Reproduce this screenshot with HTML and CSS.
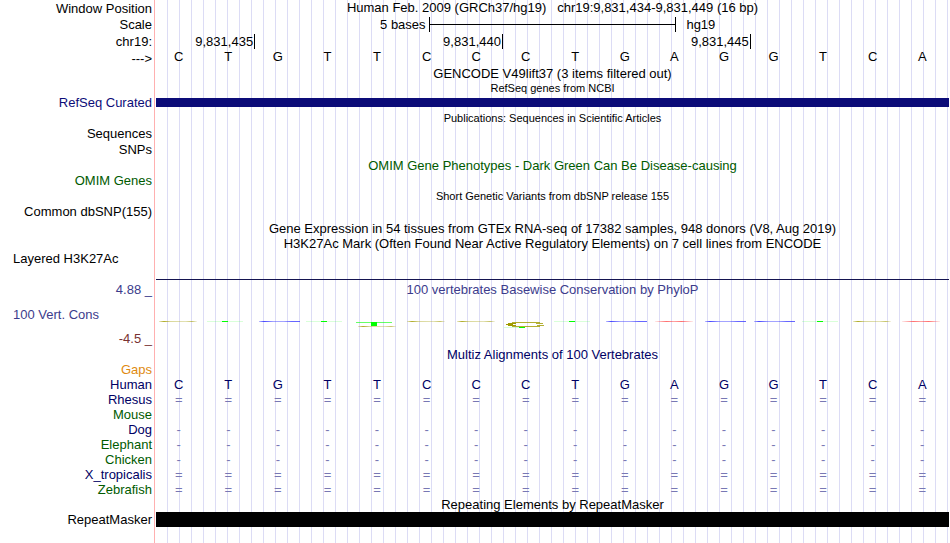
FILE: index.html
```html
<!DOCTYPE html>
<html lang="en">
<head>
<meta charset="utf-8">
<meta name="viewport" content="width=device-width, initial-scale=1.0">
<title>chr19:9,831,434-9,831,449</title>
<link rel="stylesheet" href="styles.css">
</head>
<body>
<main class="browser">

  <!-- ruler -->
  <div class="row h16"><div class="label">Window Position</div><div class="title top">Human Feb. 2009 (GRCh37/hg19) &nbsp; chr19:9,831,434-9,831,449 (16 bp)</div></div>
  <div class="row h17"><div class="label">Scale</div>
    <div class="scale"><span class="scale-size">5 bases</span><span class="scale-bar"></span><span class="scale-db">hg19</span></div>
  </div>
  <div class="row h17"><div class="label">chr19:</div>
    <div class="ruler"><span>9,831,435</span><span>9,831,440</span><span>9,831,445</span></div>
  </div>
  <div class="row h16"><div class="label">---&gt;</div>
    <div class="bases top"><span>C</span><span>T</span><span>G</span><span>T</span><span>T</span><span>C</span><span>C</span><span>C</span><span>T</span><span>G</span><span>A</span><span>G</span><span>G</span><span>T</span><span>C</span><span>A</span></div>
  </div>

  <!-- genes -->
  <div class="row"><div class="title">GENCODE V49lift37 (3 items filtered out)</div></div>
  <div class="row h14"><div class="title small">RefSeq genes from NCBI</div></div>
  <div class="row"><div class="label blue">RefSeq Curated</div><div class="bar refseq"></div></div>
  <div class="row h16"><div class="title small low">Publications: Sequences in Scientific Articles</div></div>
  <div class="row"><div class="label">Sequences</div></div>
  <div class="row h17"><div class="label">SNPs</div></div>
  <div class="row"><div class="title green">OMIM Gene Phenotypes - Dark Green Can Be Disease-causing</div></div>
  <div class="row"><div class="label green">OMIM Genes</div></div>
  <div class="row h16"><div class="title small low">Short Genetic Variants from dbSNP release 155</div></div>
  <div class="row"><div class="label">Common dbSNP(155)</div></div>
  <div class="row h17"><div class="title bottom">Gene Expression in 54 tissues from GTEx RNA-seq of 17382 samples, 948 donors (V8, Aug 2019)</div></div>
  <div class="row"><div class="title">H3K27Ac Mark (Often Found Near Active Regulatory Elements) on 7 cell lines from ENCODE</div></div>
  <div class="row"><div class="label left">Layered H3K27Ac</div></div>

  <!-- conservation -->
  <div class="cons">
    <div class="cons-line"></div>
    <div class="row"><div class="label slate">4.88 _</div><div class="title slate">100 vertebrates Basewise Conservation by PhyloP</div></div>
    <div class="row wiggle"><div class="label left slate">100 Vert. Cons</div>
      <svg class="logo" viewBox="0 0 793 34" preserveAspectRatio="none" shape-rendering="crispEdges" aria-hidden="true">
        <defs>
          <linearGradient id="olive"><stop offset="0" stop-color="#a09b00" stop-opacity=".2"/><stop offset=".13" stop-color="#a09b00" stop-opacity=".85"/><stop offset=".3" stop-color="#a09b00" stop-opacity=".4"/><stop offset=".7" stop-color="#a09b00" stop-opacity=".3"/><stop offset=".87" stop-color="#a09b00" stop-opacity=".6"/><stop offset="1" stop-color="#a09b00" stop-opacity=".1"/></linearGradient>
          <linearGradient id="blue"><stop offset="0" stop-color="#33f" stop-opacity=".3"/><stop offset=".12" stop-color="#33f" stop-opacity=".9"/><stop offset=".35" stop-color="#33f" stop-opacity=".45"/><stop offset=".6" stop-color="#33f" stop-opacity=".45"/><stop offset=".8" stop-color="#33f" stop-opacity=".75"/><stop offset="1" stop-color="#33f" stop-opacity=".75"/></linearGradient>
          <linearGradient id="red"><stop offset="0" stop-color="#f33" stop-opacity=".1"/><stop offset=".3" stop-color="#f33" stop-opacity=".7"/><stop offset=".5" stop-color="#f33" stop-opacity=".45"/><stop offset=".7" stop-color="#f33" stop-opacity=".7"/><stop offset="1" stop-color="#f33" stop-opacity=".1"/></linearGradient>
          <g id="c"><rect x="3" y="24" width="38" height="1" fill="url(#olive)"/></g>
          <g id="g"><rect x="4" y="24" width="41" height="1" fill="url(#blue)"/></g>
          <g id="a"><rect x="3" y="24" width="38" height="1" fill="url(#red)"/></g>
          <g id="t"><rect x="1" y="24" width="36" height="1" fill="#0f0" fill-opacity=".15"/><rect x="16" y="24" width="6" height="1" fill="#0f0"/></g>
        </defs>
        <use href="#c" x="0"/><use href="#t" x="50"/><use href="#g" x="99"/><use href="#t" x="149"/>
        <rect x="200" y="25" width="36" height="1" fill="#0f0" fill-opacity=".6"/>
        <rect x="215" y="25" width="6" height="4" fill="#0f0"/>
        <rect x="202" y="29" width="38" height="1" fill="url(#olive)"/>
        <use href="#c" x="248"/><use href="#c" x="298"/>
        <g fill="#a09b00">
          <rect x="356" y="25" width="28" height="1" fill-opacity=".8"/>
          <rect x="352" y="26" width="8" height="1"/><rect x="380" y="26" width="7" height="1" fill-opacity=".8"/>
          <rect x="350" y="27" width="7" height="1"/>
          <rect x="352" y="28" width="8" height="1"/><rect x="381" y="28" width="7" height="1" fill-opacity=".8"/>
          <rect x="356" y="29" width="28" height="1" fill-opacity=".8"/>
        </g>
        <rect x="348" y="30" width="15" height="1" fill="#0f0" fill-opacity=".15"/>
        <rect x="363" y="30" width="6" height="1" fill="#0f0"/>
        <use href="#t" x="397"/><use href="#g" x="446"/><use href="#a" x="496"/><use href="#g" x="545"/><use href="#g" x="594"/><use href="#t" x="645"/><use href="#c" x="694"/><use href="#a" x="743"/>
      </svg>
    </div>
    <div class="row"><div class="label maroon">-4.5 _</div></div>
  </div>

  <!-- multiz -->
  <div class="row"><div class="title navy">Multiz Alignments of 100 Vertebrates</div></div>
  <div class="row"><div class="label orange">Gaps</div></div>
  <div class="row"><div class="label navy">Human</div><div class="bases navy"><span>C</span><span>T</span><span>G</span><span>T</span><span>T</span><span>C</span><span>C</span><span>C</span><span>T</span><span>G</span><span>A</span><span>G</span><span>G</span><span>T</span><span>C</span><span>A</span></div></div>
  <div class="row"><div class="label navy">Rhesus</div><div class="bases align"><span>=</span><span>=</span><span>=</span><span>=</span><span>=</span><span>=</span><span>=</span><span>=</span><span>=</span><span>=</span><span>=</span><span>=</span><span>=</span><span>=</span><span>=</span><span>=</span></div></div>
  <div class="row"><div class="label green">Mouse</div></div>
  <div class="row"><div class="label navy">Dog</div><div class="bases align"><span>-</span><span>-</span><span>-</span><span>-</span><span>-</span><span>-</span><span>-</span><span>-</span><span>-</span><span>-</span><span>-</span><span>-</span><span>-</span><span>-</span><span>-</span><span>-</span></div></div>
  <div class="row"><div class="label green">Elephant</div><div class="bases align"><span>-</span><span>-</span><span>-</span><span>-</span><span>-</span><span>-</span><span>-</span><span>-</span><span>-</span><span>-</span><span>-</span><span>-</span><span>-</span><span>-</span><span>-</span><span>-</span></div></div>
  <div class="row"><div class="label green">Chicken</div><div class="bases align"><span>-</span><span>-</span><span>-</span><span>-</span><span>-</span><span>-</span><span>-</span><span>-</span><span>-</span><span>-</span><span>-</span><span>-</span><span>-</span><span>-</span><span>-</span><span>-</span></div></div>
  <div class="row"><div class="label navy">X_tropicalis</div><div class="bases align"><span>=</span><span>=</span><span>=</span><span>=</span><span>=</span><span>=</span><span>=</span><span>=</span><span>=</span><span>=</span><span>=</span><span>=</span><span>=</span><span>=</span><span>=</span><span>=</span></div></div>
  <div class="row"><div class="label green">Zebrafish</div><div class="bases align"><span>=</span><span>=</span><span>=</span><span>=</span><span>=</span><span>=</span><span>=</span><span>=</span><span>=</span><span>=</span><span>=</span><span>=</span><span>=</span><span>=</span><span>=</span><span>=</span></div></div>

  <!-- repeats -->
  <div class="row"><div class="title">Repeating Elements by RepeatMasker</div></div>
  <div class="row"><div class="label">RepeatMasker</div><div class="bar repeat"></div></div>
</main>
</body>
</html>
```

FILE: styles.css
```css
body {
	margin: 0;
	background: #fff;
	color: #000;
	font-family: "Liberation Sans", Helvetica, Arial, sans-serif;
	font-size: 13px;
	line-height: 15px;
}

/* pink divider, then a guide line every 12px */
.browser {
	min-height: 100vh;
	box-sizing: border-box;
	padding-right: 1px;
	background:
		linear-gradient(#ffb0b0, #ffb0b0) 154px 0 / 1px 100% no-repeat,
		linear-gradient(#fff, #fff) 0 0 / 156px 100% no-repeat,
		repeating-linear-gradient(to right, transparent 0 11px, #dcdcf5 11px 12px);
}

.row {
	display: grid;
	grid-template-columns: 156px 1fr;
	align-items: center;
	height: 15px;
	white-space: nowrap;
}
.h14 { height: 14px; }
.h16 { height: 16px; }
.h17 { height: 17px; }

.label {
	grid-column: 1;
	padding-right: 4px;
	text-align: right;
}
.label.left {
	padding-left: 13px;
	text-align: left;
}

.title {
	grid-column: 2;
	text-align: center;
}
.small { font-size: 11px; }
.low { padding-top: 1px; }
.top { align-self: start; }
.bases.top { line-height: 13px; }
.bottom { align-self: end; }

.blue { color: #0c0c78; }
.navy { color: #000064; }
.green { color: #005a00; }
.slate { color: #3c3c8c; }
.maroon { color: #783232; }
.orange { color: #e08a10; }

/* scale and ruler */
.scale {
	display: grid;
	grid-template-columns: 11fr 10fr 11fr;
	align-items: center;
}
.scale-size {
	padding-right: 3px;
	text-align: right;
}
.scale-bar {
	height: 15px;
	border: solid #000;
	border-width: 0 1px;
	background: linear-gradient(#000, #000) 0 7px / 100% 1px no-repeat;
}
.scale-db { padding-left: 10px; }

.ruler {
	display: grid;
	grid-template-columns: 2fr 5fr 5fr 4fr;
}
.ruler span {
	padding-right: 1px;
	border-right: 1px solid #000;
	text-align: right;
}

.bases {
	display: grid;
	grid-template-columns: repeat(16, 1fr);
	text-align: center;
}
.bases span { padding-right: 4px; }
.align { color: #7878b4; }

.bar.refseq {
	height: 9px;
	background: #0c0c78;
}
.bar.repeat {
	height: 15px;
	background: #000;
}

.cons { padding: 13px 0 1px; }
.cons-line {
	height: 1px;
	margin: 0 0 2px 156px;
	background: #141450;
}
.wiggle { height: 34px; }
.logo {
	display: block;
	width: 100%;
	height: 34px;
}
```
